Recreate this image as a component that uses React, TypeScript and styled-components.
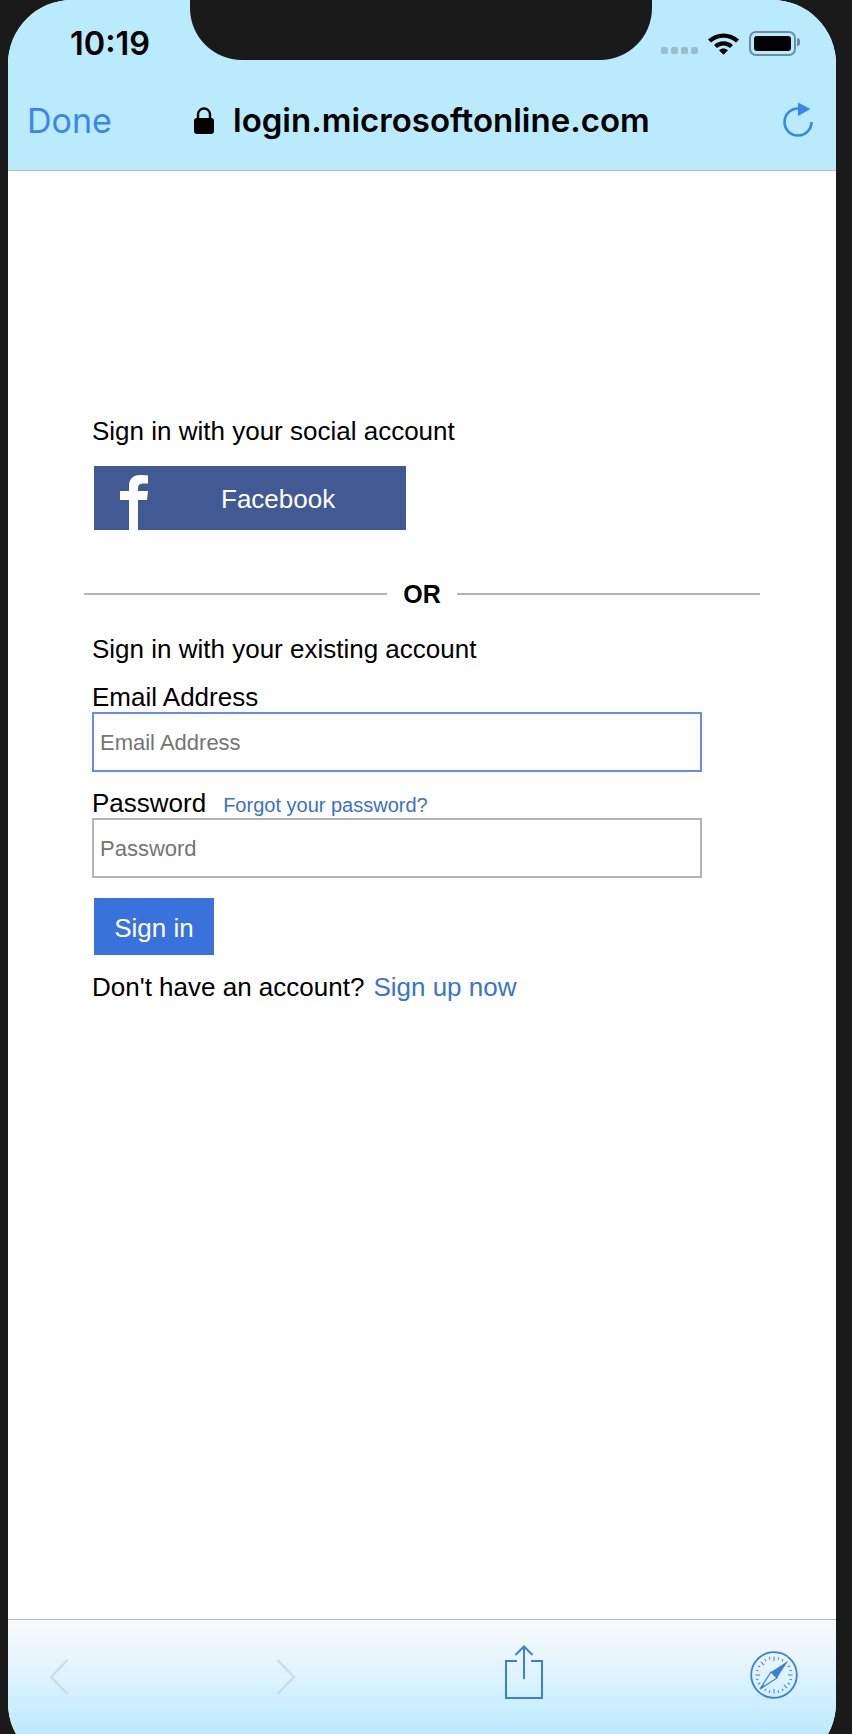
import React from "react";
import styled, { createGlobalStyle } from "styled-components";

const GlobalStyle = createGlobalStyle`
  html, body {
    margin: 0;
    padding: 0;
    background: #1a1a1a;
  }
  * {
    box-sizing: border-box;
  }
`;

const Phone = styled.div`
  width: 852px;
  height: 1734px;
  padding-left: 8px;
  background: #1a1a1a;
  overflow: hidden;
`;

const Screen = styled.div`
  width: 828px;
  height: 1767px;
  display: flex;
  flex-direction: column;
  background: #fff;
  border-radius: 64px;
  overflow: hidden;
  font-family: "Liberation Sans", Arial, sans-serif;
`;

const Header = styled.header`
  height: 171px;
  flex: none;
  background: #baebfd;
  border-bottom: 1px solid #b4bcc2;
`;

const StatusBar = styled.div`
  height: 60px;
  display: flex;
  align-items: flex-start;
`;

const Time = styled.div`
  width: 182px;
  padding: 26px 0 0 62px;
  font-family: Inter, sans-serif;
  font-size: 32.5px;
  line-height: 36px;
  font-weight: 600;
  color: #000;
`;

const Notch = styled.div`
  width: 462px;
  height: 60px;
  flex: none;
  background: #1a1a1a;
  border-radius: 0 0 52px 52px;
`;

const Indicators = styled.div`
  display: flex;
  align-items: flex-start;
  padding: 31px 0 0 9px;
`;

const SignalDots = styled.div`
  display: flex;
  gap: 3px;
  margin: 16px 9px 0 0;
`;

const SignalDot = styled.span`
  width: 7px;
  height: 7px;
  border-radius: 2px;
  background: #9cbccc;
`;

const Battery = styled.div`
  width: 47px;
  height: 25px;
  margin-left: 9px;
  padding: 3px;
  border: 2px solid #6a8da3;
  border-radius: 7px;
  position: relative;

  &::before {
    content: "";
    display: block;
    height: 100%;
    background: #000;
    border-radius: 3px;
  }

  &::after {
    content: "";
    position: absolute;
    right: -6px;
    top: 5px;
    width: 3px;
    height: 8px;
    background: #6a8da3;
    border-radius: 0 3px 3px 0;
  }
`;

const NavBar = styled.div`
  height: 110px;
  display: flex;
  align-items: center;
  padding: 10px 22px 0 19px;
`;

const DoneLink = styled.a`
  width: 167px;
  font-family: Inter, sans-serif;
  font-size: 34px;
  font-weight: 400;
  color: #3a85ee;
`;

const UrlBox = styled.div`
  flex: 1;
  display: flex;
  align-items: center;
  gap: 19px;
  font-family: Inter, sans-serif;
  font-size: 33px;
  font-weight: 600;
  color: #000;
`;

const Main = styled.main`
  flex: 1;
  padding: 245px 0 0 84px;
`;

const Lead = styled.div`
  font-size: 26px;
  line-height: 30px;
  color: #000;
`;

const FacebookButton = styled.button`
  width: 312px;
  height: 64px;
  margin: 20px 0 0 2px;
  padding: 2px 0 0 127px;
  position: relative;
  display: block;
  border: none;
  background: #415a94;
  color: #fff;
  font: inherit;
  font-size: 26px;
  overflow: hidden;
  text-align: left;
`;

const FacebookMark = styled.svg`
  position: absolute;
  left: 26px;
  top: 9px;
`;

const Divider = styled.div`
  width: 676px;
  margin: 49px 0 0 -8px;
  display: flex;
  align-items: center;
  gap: 16px;
  font-size: 25px;
  line-height: 30px;
  font-weight: 700;
  color: #000;

  &::before,
  &::after {
    content: "";
    flex: 1;
    height: 2px;
    background: #b3b3b3;
  }
`;

const SectionLead = styled(Lead)`
  margin-top: 25px;
`;

const FieldLabel = styled.label`
  display: flex;
  align-items: baseline;
  font-size: 26px;
  line-height: 30px;
  color: #000;
`;

const EmailLabel = styled(FieldLabel)`
  margin-top: 18px;
`;

const PasswordLabel = styled(FieldLabel)`
  margin-top: 18px;
  line-height: 26px;
`;

const ForgotLink = styled.a`
  margin-left: 17px;
  font-size: 20px;
  color: #3b6fc9;
`;

const TextInput = styled.input<{ $focused?: boolean }>`
  display: block;
  width: 610px;
  height: 60px;
  padding: 2px 6px 0;
  margin: 0;
  border: 2px solid ${(p) => (p.$focused ? "#5f8fe6" : "#b3b3b3")};
  border-radius: 0;
  outline: none;
  background: #fff;
  font-family: inherit;
  font-size: 22px;
  color: #000;

  &::placeholder {
    color: #757575;
    opacity: 1;
  }
`;

const SignInButton = styled.button`
  display: block;
  width: 120px;
  height: 57px;
  margin: 20px 0 0 2px;
  padding: 4px 0 0;
  border: none;
  background: #3a72dc;
  color: #fff;
  font: inherit;
  font-size: 26px;
`;

const SignUpRow = styled.div`
  margin-top: 17px;
  display: flex;
  gap: 9px;
  font-size: 26px;
  line-height: 30px;
  color: #000;
`;

const SignUpLink = styled.a`
  color: #3b73cf;
`;

const Toolbar = styled.footer`
  height: 148px;
  flex: none;
  display: grid;
  grid-template-columns: 227px 229px 246px auto;
  align-items: start;
  padding: 25px 0 0 41px;
  border-top: 1px solid #b4b8bc;
  background: linear-gradient(180deg, #f8fafb 0%, #e8f6fd 25%, #d4f1fe 50%, #bde9fd 77%, #bde9fd 100%);
`;

const ChevronIcon = styled.svg`
  margin-top: 14px;
`;

const CompassIcon = styled.svg`
  margin-top: 6px;
  margin-left: -1px;
`;

const ticks = Array.from({ length: 24 }, (_, i) => i * 15);

export default function App() {
  return (
    <Phone>
      <GlobalStyle />
      <Screen>
        <Header>
          <StatusBar>
            <Time>10:19</Time>
            <Notch />
            <Indicators>
              <SignalDots>
                <SignalDot />
                <SignalDot />
                <SignalDot />
                <SignalDot />
              </SignalDots>
              <svg width="33" height="24" viewBox="0 0 33 24">
                <path d="M1 8.5C9.5 0.5 23.5 0.5 32 8.5L29 11.5C22 5 11 5 4 11.5Z" fill="#000" />
                <path d="M7 14C12.5 9 20.5 9 26 14L23 17C19 13.5 14 13.5 10 17Z" fill="#000" />
                <path d="M12 19.3C14.8 17 18.2 17 21 19.3L16.5 23.8Z" fill="#000" />
              </svg>
              <Battery />
            </Indicators>
          </StatusBar>
          <NavBar>
            <DoneLink>Done</DoneLink>
            <UrlBox>
              <svg width="20" height="27" viewBox="0 0 20 27">
                <path d="M4 12V7.5a6 6 0 0 1 12 0V12" fill="none" stroke="#000" strokeWidth="2.4" />
                <rect x="0" y="11" width="20" height="16" rx="3" fill="#000" />
              </svg>
              login.microsoftonline.com
            </UrlBox>
            <svg width="32" height="36" viewBox="0 0 32 36">
              <path d="M29.5 20A13.5 13.5 0 1 1 16 6.5" fill="none" stroke="#3a85ee" strokeWidth="2.6" />
              <path d="M16 0.5L28.5 7L16 14Z" fill="#3a85ee" />
            </svg>
          </NavBar>
        </Header>
        <Main>
          <Lead>Sign in with your social account</Lead>
          <FacebookButton type="button">
            <FacebookMark width="30" height="55" viewBox="0 0 30 55">
              <path
                d="M9 55V25H0V16H9V11C9 4 13 0 20 0C23 0 26 0.3 28 0.5V8.5H23C19.5 8.5 18 10 18 13V16H28L27 25H18V55Z"
                fill="#fff"
              />
            </FacebookMark>
            Facebook
          </FacebookButton>
          <Divider>OR</Divider>
          <SectionLead>Sign in with your existing account</SectionLead>
          <EmailLabel>Email Address</EmailLabel>
          <TextInput $focused type="email" placeholder="Email Address" />
          <PasswordLabel>
            Password
            <ForgotLink>Forgot your password?</ForgotLink>
          </PasswordLabel>
          <TextInput type="password" placeholder="Password" />
          <SignInButton type="button">Sign in</SignInButton>
          <SignUpRow>
            Don't have an account?
            <SignUpLink>Sign up now</SignUpLink>
          </SignUpRow>
        </Main>
        <Toolbar>
          <ChevronIcon width="20" height="36" viewBox="0 0 20 36">
            <path d="M18.5 1L2 18L18.5 35" fill="none" stroke="#cddbe4" strokeWidth="2.2" />
          </ChevronIcon>
          <ChevronIcon width="20" height="36" viewBox="0 0 20 36">
            <path d="M1.5 1L18 18L1.5 35" fill="none" stroke="#cddbe4" strokeWidth="2.2" />
          </ChevronIcon>
          <svg width="38" height="54" viewBox="0 0 38 54">
            <path d="M12 16H1V53H37V16H26" fill="none" stroke="#3a7fe0" strokeWidth="2" />
            <path d="M19 34V2M10.5 10L19 1.5L27.5 10" fill="none" stroke="#3a7fe0" strokeWidth="2" />
          </svg>
          <CompassIcon width="48" height="48" viewBox="0 0 48 48">
            <circle cx="24" cy="24" r="22.8" fill="none" stroke="#3a7fe0" strokeWidth="1.8" />
            {ticks.map((deg) => (
              <line
                key={deg}
                x1="24"
                y1="5.5"
                x2="24"
                y2={deg % 45 === 0 ? "10" : "8"}
                stroke="#3a7fe0"
                strokeWidth="1"
                transform={`rotate(${deg} 24 24)`}
              />
            ))}
            <path d="M38 10L27 27L21 21Z" fill="#3a7fe0" />
            <path d="M10 38L21 21L27 27Z" fill="none" stroke="#3a7fe0" strokeWidth="1.2" />
          </CompassIcon>
        </Toolbar>
      </Screen>
    </Phone>
  );
}
